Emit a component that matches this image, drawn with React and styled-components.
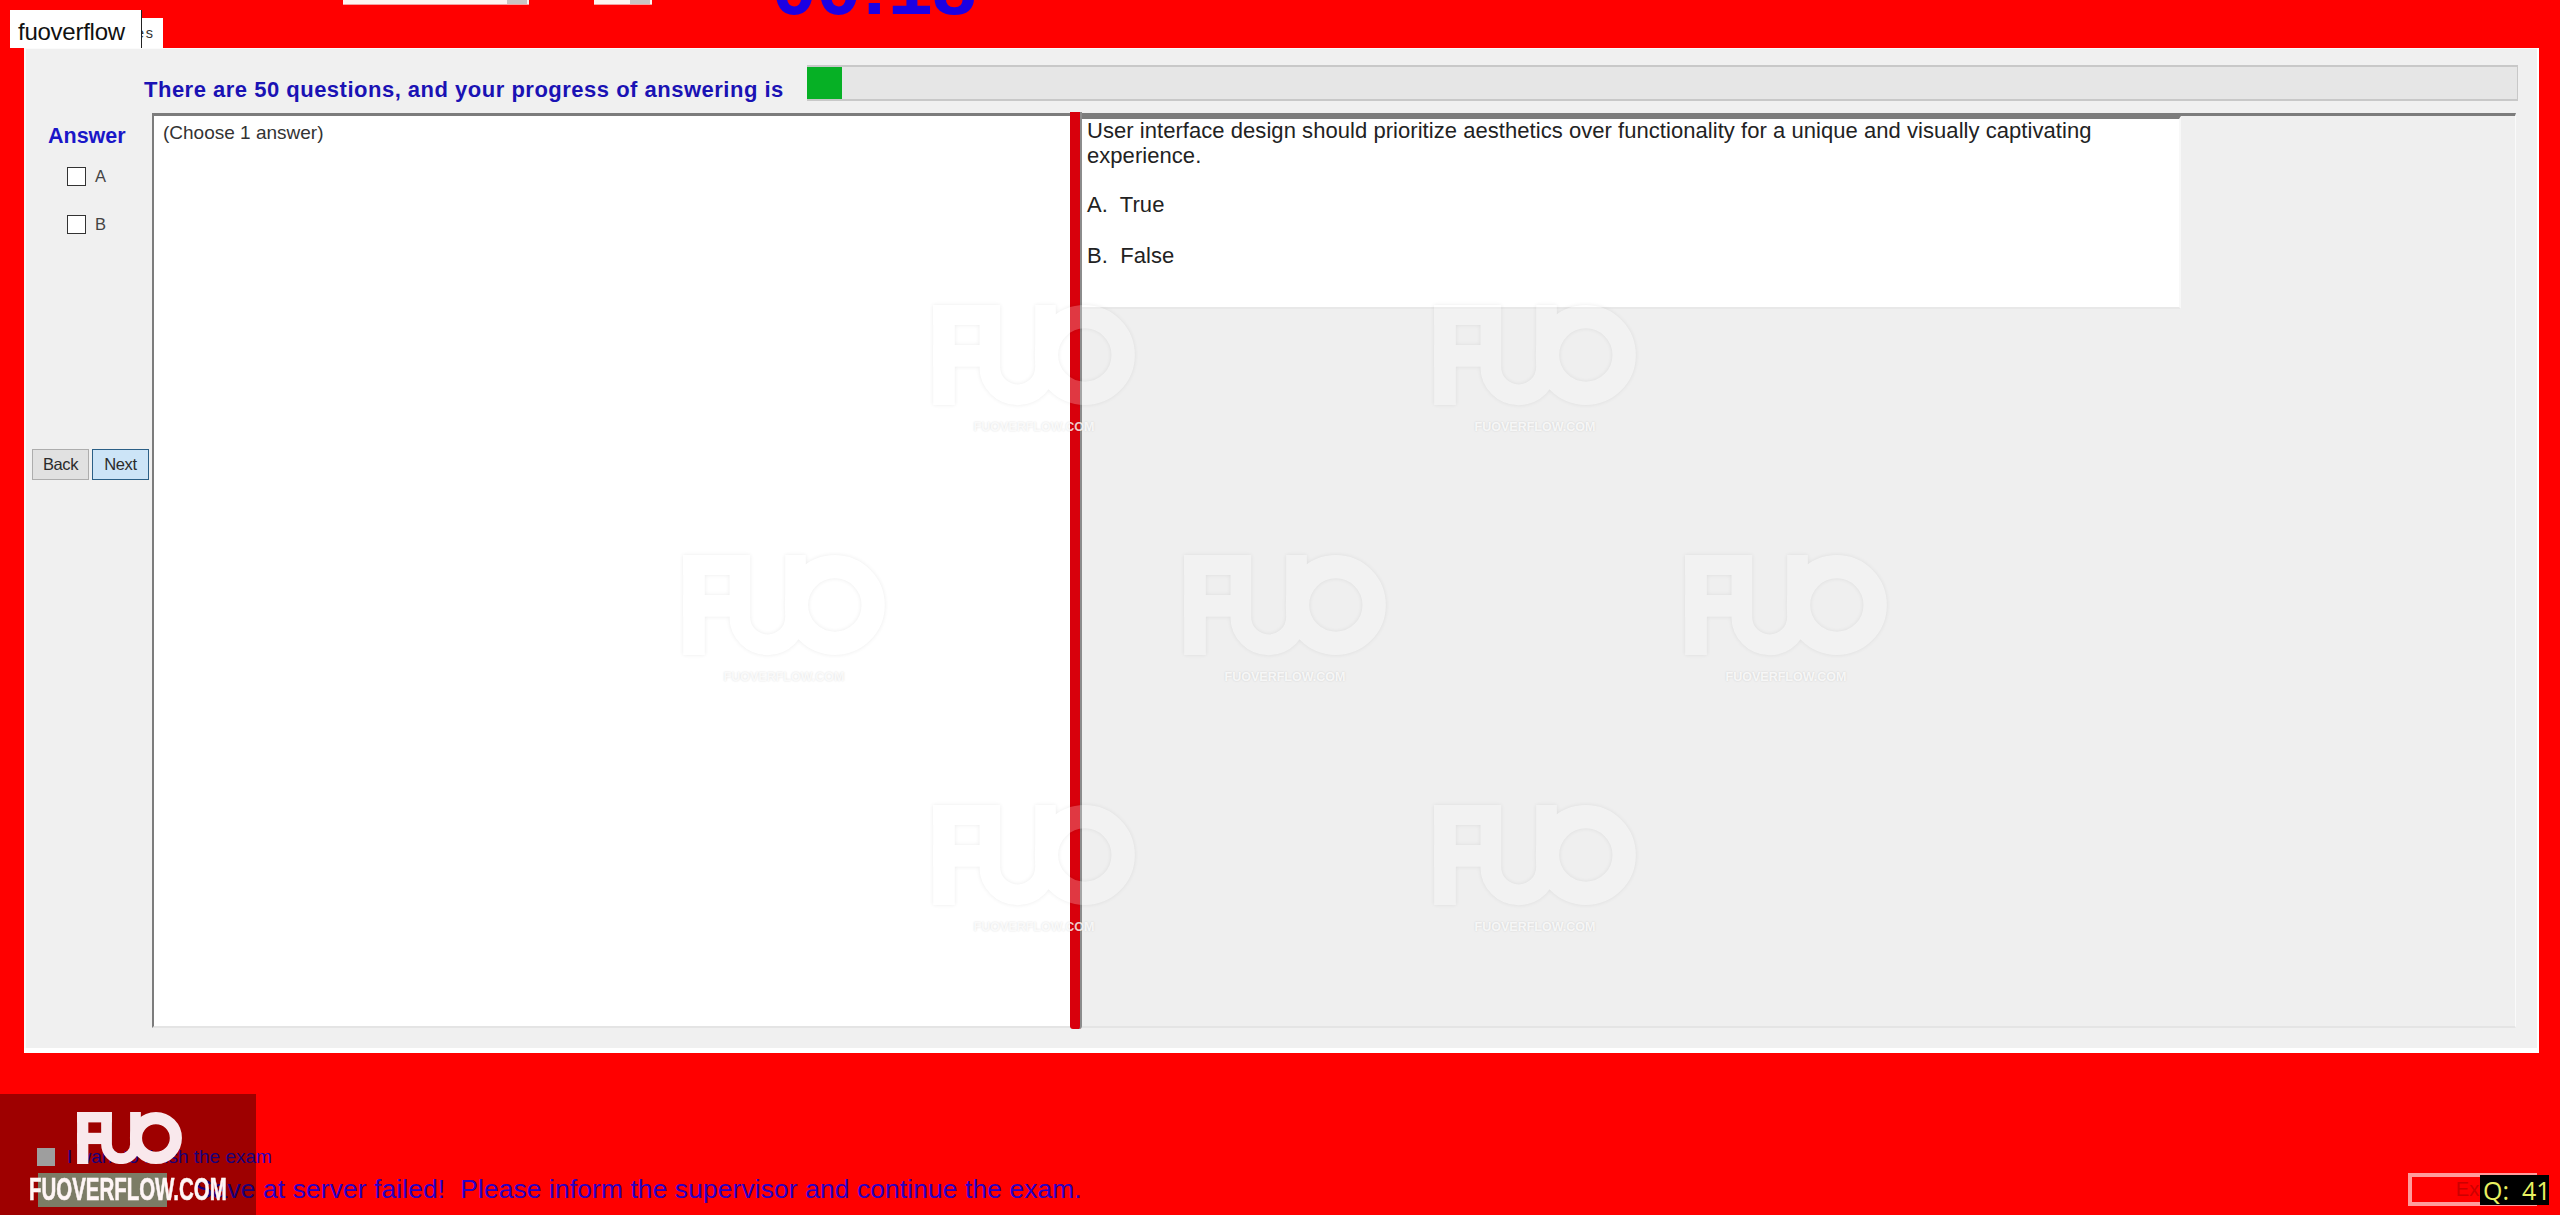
import React from "react";
import styled, { createGlobalStyle } from "styled-components";

const GlobalStyle = createGlobalStyle`
  html, body {
    margin: 0;
    padding: 0;
    overflow: hidden;
    background: #ff0000;
    font-family: "Liberation Sans", Arial, sans-serif;
  }
  * {
    box-sizing: border-box;
  }
`;

const Page = styled.div`
  position: relative;
  display: flex;
  flex-direction: column;
  width: 2560px;
  height: 1215px;
  overflow: hidden;
  background: #ff0000;
`;

const TopStrip = styled.div`
  display: flex;
  align-items: flex-start;
  height: 18px;
  padding-left: 343px;
`;

const CutInput = styled.div`
  display: flex;
  justify-content: flex-end;
  width: ${(p) => p.$width}px;
  height: 5px;
  margin-right: ${(p) => p.$gap}px;
  padding-right: 2px;
  background: #fdf4f0;
  border-bottom: 1px solid #f4a0a0;

  &::after {
    content: "";
    width: 20px;
    height: 4px;
    background: #c9c4c2;
  }
`;

const Timer = styled.div`
  height: 65px;
  margin-top: -46px;
  margin-left: -4px;
  color: #1c00e4;
  font-size: 80px;
  font-weight: bold;
  line-height: 65px;
`;

const TabRow = styled.div`
  display: flex;
  height: 30px;
  padding-left: 24px;
`;

const Tab = styled.div`
  width: 139px;
  padding: 7px 10px 0 0;
  background: #ffffff;
  color: #333333;
  font-size: 14.5px;
  letter-spacing: 1.5px;
  text-align: right;
  white-space: nowrap;
`;

const SiteLabel = styled.div`
  position: absolute;
  top: 10px;
  left: 10px;
  width: 132px;
  height: 38px;
  padding: 8px 0 0 8px;
  background: #ffffff;
  border-right: 1px solid #222222;
  color: #111111;
  font-size: 24px;
  letter-spacing: -0.25px;
`;

const Panel = styled.main`
  width: 2515px;
  height: 1005px;
  margin-left: 24px;
  padding: 17px 19px 20px 0;
  background: #f0f0f0;
  border-right: 2px solid #ffffff;
  border-bottom: 5px solid #ffffff;
  box-shadow: inset 0 1px 0 #fbfbfb, inset 2px 0 0 #fbfbfb;
`;

const ProgressRow = styled.div`
  display: flex;
  height: 36px;
  margin-bottom: 12px;
  padding-left: 120px;
`;

const ProgressLabel = styled.div`
  align-self: flex-end;
  width: 663px;
  margin-bottom: -2px;
  color: #1a12b4;
  font-size: 22px;
  font-weight: bold;
  letter-spacing: 0.5px;
  line-height: 26px;
  white-space: nowrap;
`;

const ProgressBar = styled.div`
  flex: 1;
  background: #e6e6e6;
  border: 1px solid #c8c8c8;
  border-width: 2px 1px 2px 0;
`;

const ProgressFill = styled.div`
  height: 100%;
  background: #06b025;
`;

const MainRow = styled.div`
  display: flex;
  height: 915px;
`;

const Sidebar = styled.aside`
  display: flex;
  flex-direction: column;
  width: 128px;
  padding: 10px 0 0 8px;
`;

const AnswerTitle = styled.div`
  height: 26px;
  margin: 0 0 3px 16px;
  color: #1a16c8;
  font-size: 21.5px;
  font-weight: bold;
  line-height: 26px;
`;

const CheckRow = styled.label`
  display: flex;
  align-items: center;
  gap: 9px;
  height: 48px;
  margin-left: 35px;
  color: #444444;
  font-size: 16.5px;
`;

const CheckBox = styled.span`
  width: 19px;
  height: 19px;
  background: #ffffff;
  border: 1px solid #333333;
`;

const NavRow = styled.div`
  display: flex;
  gap: 3px;
  margin-top: 201px;
`;

const NavButton = styled.button`
  width: 57px;
  height: 31px;
  padding: 0;
  background: ${(p) => (p.$active ? "#cce4f7" : "#e1e1e1")};
  border: 1px solid ${(p) => (p.$active ? "#2b5f86" : "#adadad")};
  color: #2b2b2b;
  font-family: "Liberation Sans", Arial, sans-serif;
  font-size: 16.5px;
  letter-spacing: -0.4px;
`;

const LeftPane = styled.section`
  width: 918px;
  padding: 6px 0 0 9px;
  background: #ffffff;
  border-top: 3px solid #7c7c7c;
  border-left: 2px solid #7c7c7c;
  border-bottom: 2px solid #e4e4e4;
  color: #333333;
  font-size: 19px;
`;

const Splitter = styled.div`
  width: 12px;
  height: 917px;
  margin-top: -1px;
  background: #d8000c;
  border-right: 2px solid #8c8c8c;
  border-radius: 0 0 3px 3px;
`;

const RightPane = styled.section`
  flex: 1;
  margin-right: 2px;
  background: #efefef;
  border-top: 3px solid #7c7c7c;
  border-right: 1px solid #fafafa;
  border-bottom: 2px solid #e4e4e4;
`;

const QuestionBox = styled.div`
  width: 1099px;
  height: 193px;
  padding: 0 0 0 5px;
  background: #ffffff;
  border-top: 3px solid #7c7c7c;
  border-right: 2px solid #f8f8f8;
  border-bottom: 2px solid #e8e8e8;
  color: #222222;
  font-size: 22px;
  letter-spacing: 0.05px;
  line-height: 25px;
`;

const QuestionText = styled.p`
  width: 1040px;
  margin: -1px 0 24px;
`;

const Choice = styled.p`
  margin: 0 0 26px;
  white-space: pre;
`;

const Footer = styled.footer`
  display: flex;
  flex: 1;
  align-items: flex-end;
  justify-content: space-between;
  padding: 0 23px 9px 37px;
`;

const StatusColumn = styled.div`
  display: flex;
  flex-direction: column;
  margin-bottom: 3px;
  color: #2a00c4;
`;

const FinishRow = styled.div`
  display: flex;
  align-items: center;
  gap: 12px;
  height: 18px;
  margin-bottom: 9px;
  font-size: 19px;
`;

const FinishBox = styled.span`
  width: 18px;
  height: 18px;
  background: #ffffff;
`;

const StatusMessage = styled.div`
  margin-left: 158px;
  font-size: 26.3px;
  letter-spacing: 0.15px;
  line-height: 28px;
  white-space: pre;
`;

const ExitButton = styled.button`
  width: 129px;
  height: 33px;
  padding: 0;
  background: #ff0000;
  border: 4px solid #ff9c9c;
  color: #cc0000;
  font-family: "Liberation Sans", Arial, sans-serif;
  font-size: 20px;
`;

const QuestionChip = styled.div`
  position: absolute;
  right: 11px;
  bottom: 10px;
  width: 69px;
  height: 30px;
  padding-left: 3px;
  background: #000000;
  color: #e8f060;
  font-family: "Open Sans", sans-serif;
  font-size: 25px;
  line-height: 30px;
  white-space: pre;
`;

const BrandCorner = styled.div`
  position: absolute;
  left: 0;
  bottom: 0;
  display: flex;
  flex-direction: column;
  align-items: center;
  width: 256px;
  height: 121px;
  padding-top: 18px;
  background: rgba(0, 0, 0, 0.38);
`;

const BrandChip = styled.div`
  position: absolute;
  top: 79px;
  left: 38px;
  width: 129px;
  height: 34px;
  background: #7c7c66;
`;

const BrandMark = styled.svg`
  position: relative;
  width: 109px;
  height: 52px;
  margin-left: 2px;
  color: #f9e8ec;
`;

const BrandName = styled.div`
  position: relative;
  margin-top: 10px;
  color: #fff6f6;
  font-size: 31px;
  font-weight: bold;
  line-height: 31px;
  white-space: nowrap;
  transform: scaleX(0.66);
  -webkit-text-stroke: 0.6px #fff6f6;
`;

const WatermarkLayer = styled.div`
  position: absolute;
  inset: 0;
  pointer-events: none;
`;

const Watermark = styled.div`
  position: absolute;
  top: ${(p) => p.$y}px;
  left: ${(p) => p.$x}px;
  display: flex;
  flex-direction: column;
  align-items: center;
  width: 204px;
`;

const WatermarkMark = styled.svg`
  width: 202px;
  height: 100px;
  overflow: visible;
  color: #ffffff;
  opacity: 0.22;
  filter: drop-shadow(0 0 2px rgba(0, 0, 0, 0.35));
`;

const WatermarkName = styled.div`
  margin-top: 15px;
  color: rgba(255, 255, 255, 0.8);
  font-size: 12.5px;
  font-weight: bold;
  line-height: 14px;
  text-shadow: 0 0 2px rgba(0, 0, 0, 0.14);
  white-space: nowrap;
`;

const FuoShape = () => (
  <>
    <rect x="0" y="0" width="65" height="300" fill="currentColor" />
    <rect x="0" y="0" width="200" height="60" fill="currentColor" />
    <rect x="0" y="120" width="145" height="65" fill="currentColor" />
    <path
      d="M170 0V186A83.5 83.5 0 0 0 337 186V0"
      fill="none"
      stroke="currentColor"
      strokeWidth="62"
    />
    <circle cx="455" cy="150" r="115" fill="none" stroke="currentColor" strokeWidth="70" />
  </>
);

const watermarks = [
  { x: 932, y: 305 },
  { x: 1433, y: 305 },
  { x: 682, y: 555 },
  { x: 1183, y: 555 },
  { x: 1684, y: 555 },
  { x: 932, y: 805 },
  { x: 1433, y: 805 },
];

export default function App() {
  return (
    <Page>
      <GlobalStyle />
      <TopStrip>
        <CutInput $width={186} $gap={65} />
        <CutInput $width={58} $gap={124} />
        <Timer>00:18</Timer>
      </TopStrip>
      <TabRow>
        <Tab>Multiple Choices</Tab>
      </TabRow>

      <Panel>
        <ProgressRow>
          <ProgressLabel>There are 50 questions, and your progress of answering is</ProgressLabel>
          <ProgressBar>
            <ProgressFill style={{ width: `${(35 / 1711) * 100}%` }} />
          </ProgressBar>
        </ProgressRow>
        <MainRow>
          <Sidebar>
            <AnswerTitle>Answer</AnswerTitle>
            <CheckRow>
              <CheckBox /> A
            </CheckRow>
            <CheckRow>
              <CheckBox /> B
            </CheckRow>
            <NavRow>
              <NavButton>Back</NavButton>
              <NavButton $active>Next</NavButton>
            </NavRow>
          </Sidebar>
          <LeftPane>(Choose 1 answer)</LeftPane>
          <Splitter />
          <RightPane>
            <QuestionBox>
              <QuestionText>
                User interface design should prioritize aesthetics over functionality for a unique
                and visually captivating experience.
              </QuestionText>
              <Choice>A.  True</Choice>
              <Choice>B.  False</Choice>
            </QuestionBox>
          </RightPane>
        </MainRow>
      </Panel>

      <Footer>
        <StatusColumn>
          <FinishRow>
            <FinishBox />I want to finish the exam
          </FinishRow>
          <StatusMessage>Save at server failed!  Please inform the supervisor and continue the exam.</StatusMessage>
        </StatusColumn>
        <ExitButton>Exit</ExitButton>
      </Footer>

      <WatermarkLayer>
        {watermarks.map((mark) => (
          <Watermark key={`${mark.x}-${mark.y}`} $x={mark.x} $y={mark.y}>
            <WatermarkMark viewBox="0 0 605 300">
              <FuoShape />
            </WatermarkMark>
            <WatermarkName>FUOVERFLOW.COM</WatermarkName>
          </Watermark>
        ))}
      </WatermarkLayer>

      <SiteLabel>fuoverflow</SiteLabel>
      <QuestionChip>Q:  41</QuestionChip>
      <BrandCorner>
        <BrandChip />
        <BrandMark viewBox="0 0 605 300">
          <FuoShape />
        </BrandMark>
        <BrandName>FUOVERFLOW.COM</BrandName>
      </BrandCorner>
    </Page>
  );
}
